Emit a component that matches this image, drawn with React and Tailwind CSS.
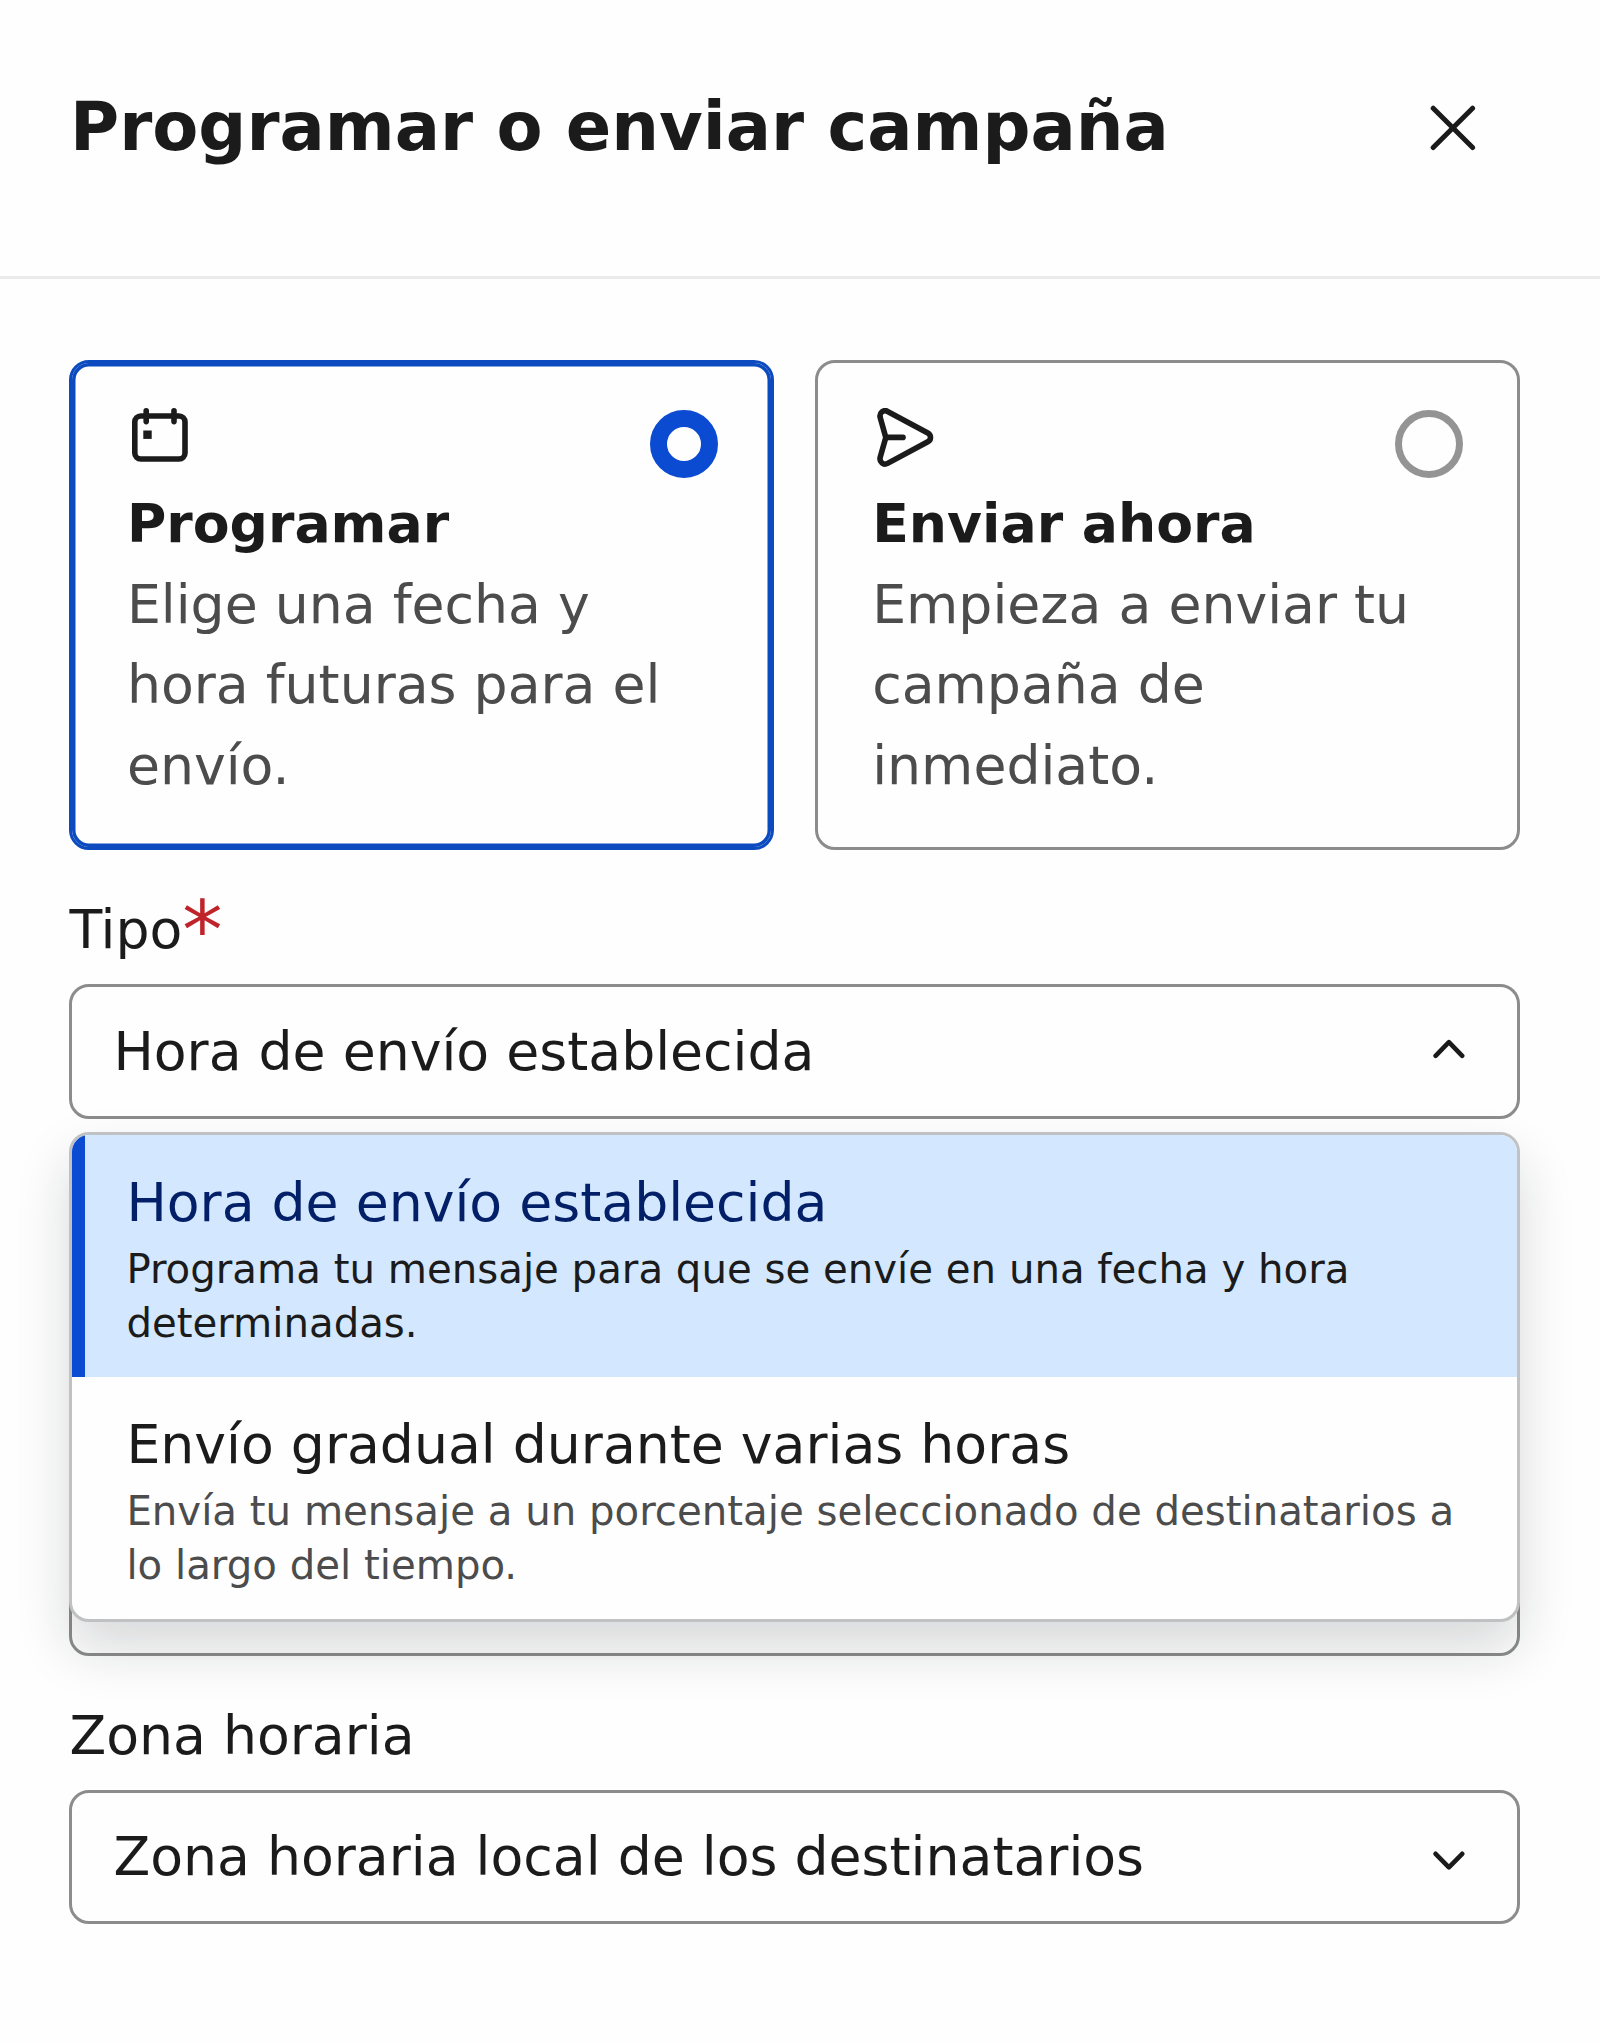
import React, { useState } from 'react';

const CalendarIcon = () => (
    <svg width="56" height="54" viewBox="0 0 56 54" fill="none" stroke="currentColor" strokeWidth="5.6" strokeLinecap="round">
        <rect x="2.8" y="8" width="50.2" height="43" rx="6" />
        <path d="M14.2 2.8V13.6M42 2.8V13.6" />
        <rect x="11.3" y="22.5" width="8.4" height="8.4" fill="currentColor" stroke="none" />
    </svg>
);

const SendIcon = () => (
    <svg width="57" height="59" viewBox="0 0 57 59" fill="none" stroke="currentColor" strokeWidth="5.6" strokeLinecap="round" strokeLinejoin="round">
        <path d="M3.2 9.6C2 4.8 6.4 1.2 10.6 3.4L50.8 25C54.4 27 54.4 31.8 50.8 33.8L10.6 55.4C6.4 57.6 2 54 3.2 49.2L8.8 29.4Z" />
        <path d="M8.8 29.4H26" />
    </svg>
);

const Chevron = ({ up }) => (
    <svg width="32" height="20" viewBox="0 0 32 20" fill="none" stroke="currentColor" strokeWidth="4.6" strokeLinecap="round" strokeLinejoin="round">
        <path d={up ? 'M2.6 16.8L15.9 3.2L29.2 16.8' : 'M2.6 2.8L15.9 16.4L29.2 2.8'} />
    </svg>
);

const cards = [
    {
        id: 'schedule',
        title: 'Programar',
        text: 'Elige una fecha y hora futuras para el envío.',
        icon: <CalendarIcon />,
        iconClass: 'pl-[5px] pt-[4px]',
    },
    {
        id: 'now',
        title: 'Enviar ahora',
        text: 'Empieza a enviar tu campaña de inmediato.',
        icon: <SendIcon />,
        iconClass: 'pl-[5px] pt-[4px]',
    },
];

const options = [
    {
        title: 'Hora de envío establecida',
        text: 'Programa tu mensaje para que se envíe en una fecha y hora determinadas.',
    },
    {
        title: 'Envío gradual durante varias horas',
        text: 'Envía tu mensaje a un porcentaje seleccionado de destinatarios a lo largo del tiempo.',
    },
];

const Card = ({ card, selected, onSelect }) => (
    <button
        type="button"
        onClick={onSelect}
        className={`flex-1 text-left rounded-[20px] border-[3px] pl-[54.5px] pr-[53.5px] pt-[41px] pb-[41px] ${
            selected ? 'border-[#0b4abf] shadow-[inset_0_0_0_3.5px_#0b4abf]' : 'border-[#8c8c8c]'
        }`}
    >
        <div className="flex justify-between items-start h-[80.5px]">
            <span className={card.iconClass}>{card.icon}</span>
            <span
                className={`mt-[6px] w-[68px] h-[68px] rounded-full ${
                    selected ? 'border-[17px] border-[#0b4bd2]' : 'border-[7px] border-[#949494]'
                }`}
            />
        </div>
        <div className="font-bold">{card.title}</div>
        <div className="text-[#4c4c4c]">{card.text}</div>
    </button>
);

const SelectBox = ({ value, open, onClick }) => (
    <button
        type="button"
        onClick={onClick}
        className="flex items-center justify-between w-full h-[134.5px] rounded-[20px] border-[3px] border-[#8c8c8c] pl-[41px] pr-[51.5px] text-left"
    >
        <span className="pt-px">{value}</span>
        <span className={open ? 'pb-[5px]' : 'pt-[8px]'}>
            <Chevron up={open} />
        </span>
    </button>
);

const Options = ({ selected, onSelect }) => (
    <ul className="absolute z-10 inset-x-0 top-[148px] rounded-[20px] border-[3px] border-[#bfc1c3] bg-[#fefefe] overflow-hidden shadow-[0_27px_54px_rgba(20,24,32,0.16)]">
        {options.map((option, index) => (
            <li
                key={option.title}
                onClick={() => onSelect(index)}
                className={`h-[242px] border-l-[13.5px] pt-[28px] pb-[26px] pl-[41px] pr-[26px] ${
                    index === selected ? 'bg-[#d3e8fe] border-[#0b4bd2] text-[#031f67]' : 'border-transparent'
                }`}
            >
                <div className="h-[80px]">{option.title}</div>
                <div className={`text-[40.25px] leading-[53.7px] ${index === selected ? 'text-[#1b1b1b]' : 'text-[#4c4c4c]'}`}>
                    {option.text}
                </div>
            </li>
        ))}
    </ul>
);

const App = () => {
    const [mode, setMode] = useState('schedule');
    const [type, setType] = useState(0);
    const [open, setOpen] = useState(true);

    return (
        <div className="min-h-screen bg-[#fefefe] text-[#1b1b1b] font-['DejaVu_Sans',sans-serif] text-[53.66px] leading-[80.5px]">
            <header className="flex items-center justify-between h-[279px] border-b-[3px] border-[#ebebeb] pl-[70px] pr-[124px] pb-[22px]">
                <h1 className="text-[67.1px] font-bold">Programar o enviar campaña</h1>
                <button type="button" className="pt-[2px]">
                    <svg width="46" height="46" viewBox="0 0 46 46" fill="none" stroke="currentColor" strokeWidth="5" strokeLinecap="round">
                        <path d="M3.2 3.2L42.6 42.6M42.6 3.2L3.2 42.6" />
                    </svg>
                </button>
            </header>
            <main className="flex flex-col gap-[40px] pt-[80.5px] pl-[69.4px] pr-[80.5px]">
                <div className="flex gap-[40.5px]">
                    {cards.map((card) => (
                        <Card key={card.id} card={card} selected={card.id === mode} onSelect={() => setMode(card.id)} />
                    ))}
                </div>
                <div>
                    <div className="flex h-[80.5px] mb-[13.5px]">
                        <span>Tipo</span>
                        <span className="text-[80.5px] text-[#c0242b]">*</span>
                    </div>
                    <div className="relative">
                        <SelectBox value={options[type].title} open={open} onClick={() => setOpen(!open)} />
                        {open && <Options selected={type} onSelect={setType} />}
                    </div>
                </div>
                {/* date and time inputs */}
                <div className="pt-[94px]">
                    <div className="h-[134.5px] rounded-[20px] border-[3px] border-[#8c8c8c]" />
                </div>
                <div className="pt-[94px]">
                    <div className="h-[134.5px] rounded-[20px] border-[3px] border-[#8c8c8c]" />
                </div>
                <div>
                    <div className="mb-[13.5px]">Zona horaria</div>
                    <SelectBox value="Zona horaria local de los destinatarios" />
                </div>
            </main>
        </div>
    );
};

export default App;
